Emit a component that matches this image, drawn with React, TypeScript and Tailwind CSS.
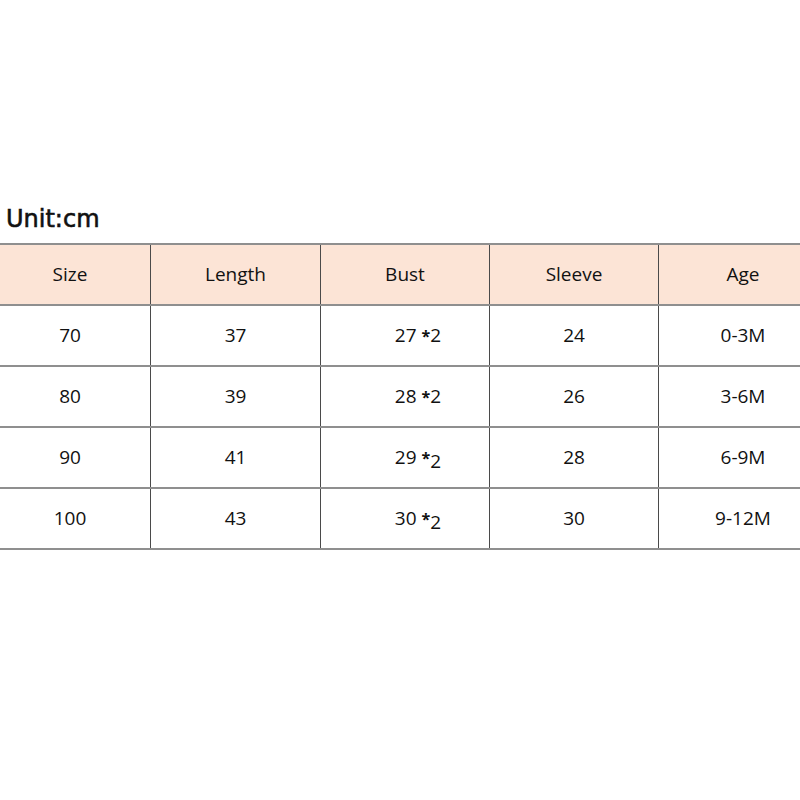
import React from 'react'

const headers = ['Size', 'Length', 'Bust', 'Sleeve', 'Age']

const rows = [
  { size: '70', length: '37', bust: '27', sleeve: '24', age: '0-3M', low: false },
  { size: '80', length: '39', bust: '28', sleeve: '26', age: '3-6M', low: false },
  { size: '90', length: '41', bust: '29', sleeve: '28', age: '6-9M', low: true },
  { size: '100', length: '43', bust: '30', sleeve: '30', age: '9-12M', low: true },
]

// largeur des colonnes + décalage du texte
const cols = [
  'w-[151px] pr-[10px]',
  'w-[170px]',
  'w-[169px]',
  'w-[169px]',
  'w-[169px]',
]

function Cell({ i, extra = '', children }: { i: number; extra?: string; children: React.ReactNode }) {
  return (
    <div className={`${cols[i]} ${extra} shrink-0 h-full flex items-center justify-center border-r border-[#4a4a4a]`}>
      {children}
    </div>
  )
}

export default function App() {
  return (
    <div className="w-[800px] h-[800px] bg-white overflow-hidden pt-[204px]">
      <div
        className="ml-[6px] text-[24px] leading-[30px] text-[#111] [-webkit-text-stroke:0.6px_#111]"
        style={{ fontFamily: '"DejaVu Sans", sans-serif' }}
      >
        Unit:cm
      </div>

      <div
        className="mt-[9px] text-[19px] text-[#111] border-t-2 border-[#8f8f8f]"
        style={{ fontFamily: '"Open Sans", "Noto Sans", sans-serif' }}
      >
        {/* En-tête */}
        <div className="flex h-[61px] bg-[#fce4d6] border-b-2 border-[#8f8f8f]">
          {headers.map((h, i) => (
            <Cell key={h} i={i}>{h}</Cell>
          ))}
        </div>

        {rows.map(r => (
          <div key={r.size} className="flex h-[61px] border-b-2 border-[#8f8f8f]">
            <Cell i={0}>{r.size}</Cell>
            <Cell i={1}>{r.length}</Cell>
            <Cell i={2} extra="pl-[26px]">
              <span>
                {r.bust}{' '}
                <span className="font-bold text-[16px]">*</span>
                <span className={r.low ? 'inline-block translate-y-[4px]' : ''}>2</span>
              </span>
            </Cell>
            <Cell i={3}>{r.sleeve}</Cell>
            <Cell i={4}>{r.age}</Cell>
          </div>
        ))}
      </div>
    </div>
  )
}
